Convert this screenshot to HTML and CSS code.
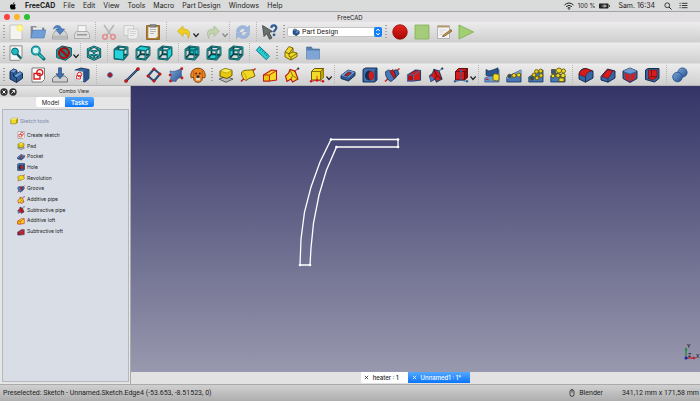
FILE: index.html
```html
<!DOCTYPE html>
<html lang="fr">
<head>
    <meta charset="UTF-8">
    <meta name="viewport" content="width=device-width, initial-scale=1">
    <title>FreeCAD</title>
    <link rel="stylesheet" href="styles.css">
</head>
<body>
    <!-- icon set -->
    <svg class="sprite" aria-hidden="true">
        <defs>
            <linearGradient id="gBlue" x1="0" y1="0" x2="1" y2="1"><stop offset="0" stop-color="#7ba9dc"/><stop offset="1" stop-color="#27508d"/></linearGradient>
            <linearGradient id="gRed" x1="0" y1="0" x2="0" y2="1"><stop offset="0" stop-color="#e8241c"/><stop offset="1" stop-color="#a80505"/></linearGradient>
        </defs>
        <symbol id="new" viewBox="0 0 16 16"><path d="M2 1h12v14.500H2z" fill="#f3f3f1" stroke="#b5b5b0" stroke-width=".7"/><circle cx="12" cy="4" r="3.600" fill="#fff36a" opacity=".8"/><path d="M12 1.500l.8 1.700 1.700.8-1.700.8-.8 1.700-.8-1.700-1.700-.8 1.700-.8z" fill="#fffbc0"/></symbol>
        <symbol id="open" viewBox="0 0 16 16"><path d="M1 2.500h5l1 1.500h7v9H1z" fill="#8b8f94" stroke="#64686c" stroke-width=".5"/><path d="M3 3.500h9v5H3z" fill="#eee"/><path d="M3 6h13l-2 8H.8z" fill="#6f9fd6" stroke="#4a78b4" stroke-width=".6"/></symbol>
        <symbol id="save" viewBox="0 0 16 16"><path d="M3 7h10l2.500 4.500v3.500H.5v-3.500z" fill="#d4d5d3" stroke="#83868a" stroke-width=".6"/><path d="M1 11.500h14v3H1z" fill="#b8bab8"/><path d="M1.500 5C2 .8 8.500-.2 9.500 5h3L8 10.500 3.700 5h2.600C6 3 3.500 3 1.500 5z" fill="#4d83c4" stroke="#2f5d99" stroke-width=".6"/></symbol>
        <symbol id="print" viewBox="0 0 16 16"><path d="M4 1.500h8V8H4z" fill="#f4f4f4" stroke="#a7a7a7" stroke-width=".6"/><path d="M2.500 7.500h11l2 3v4H.5v-4z" fill="#dedede" stroke="#8e8e8e" stroke-width=".6"/><path d="M3 10h10v1.500H3z" fill="#999"/></symbol>
        <symbol id="cut" viewBox="0 0 16 16"><path d="M3 1l7 10M13 1L6 11" stroke="#b7b7b7" stroke-width="1.600"/><g fill="none" stroke="#e58e8e" stroke-width="1.600"><circle cx="4" cy="12.800" r="2.300"/><circle cx="12" cy="12.800" r="2.300"/></g></symbol>
        <symbol id="copy" viewBox="0 0 16 16"><g fill="#ededed" stroke="#b9b9b9" stroke-width=".6"><path d="M1 1.500h9.500v10H1z"/><path d="M5 5h10v7.500L12.500 15H5z"/></g><path d="M7 7.500h6M7 9.500h6M7 11.500h4" stroke="#c7c7c7" stroke-width=".7"/></symbol>
        <symbol id="paste" viewBox="0 0 16 16"><path d="M1.500 1.500h13v14h-13z" fill="#b57d2c" stroke="#78501a" stroke-width=".7"/><path d="M3.300 3h9.400v9.500L10.500 14H3.300z" fill="#eeeeec"/><path d="M5 .6h6v2.600H5z" fill="#8b8d89" stroke="#555" stroke-width=".5"/><path d="M5 5.500h6M5 7.500h6M5 9.500h4" stroke="#aaa" stroke-width=".8"/></symbol>
        <symbol id="undo" viewBox="0 0 16 16"><path d="M1.500 7L7 2v3c6-.3 8.500 4 5 9.500.5-4-1.500-5.500-5-5v3z" fill="#efcf22" stroke="#c9a800" stroke-width=".6"/></symbol>
        <symbol id="redo" viewBox="0 0 16 16"><path d="M14.500 7L9 2v3C3 4.700.5 9 4 14.500c-.5-4 1.500-5.500 5-5v3z" fill="#c2d3ae" stroke="#a0b48b" stroke-width=".6"/></symbol>
        <symbol id="refresh" viewBox="0 0 16 16"><g fill="#9db8dc" stroke="#7c9dca" stroke-width=".5"><path d="M1.500 7.500C2 1.500 9 0 12.300 3.500L14.500 1.500V7.500H8.500l2-2C8 3.500 5 4.800 4.500 7.500z"/><path d="M14.500 8.700C14 14.700 7 16 3.700 12.500L1.500 14.500V8.700h6l-2 2C8 12.700 11 11.400 11.500 8.700z"/></g></symbol>
        <symbol id="whats" viewBox="0 0 16 16"><path d="M.5 1.500l10 6-3.500 1 3 5.500-2.500 1.200-2.700-5.500L2 12.500z" fill="#6a6f70" stroke="#3b4143" stroke-width=".8"/><path d="M9.300 3.800c.4-3.300 5.300-3 5 .2-.2 2-2.200 2.200-2.300 4.300" fill="none" stroke="#2e5a94" stroke-width="2.200"/><circle cx="12" cy="10.800" r="1.400" fill="#2e5a94"/></symbol>
        <symbol id="rec" viewBox="0 0 16 16"><circle cx="8" cy="8" r="7.300" fill="url(#gRed)" stroke="#7e0a0a" stroke-width=".7"/></symbol>
        <symbol id="stop" viewBox="0 0 16 16"><path d="M1 1h14v14H1z" fill="#a5cc79" stroke="#84ae5a" stroke-width=".8"/></symbol>
        <symbol id="macro" viewBox="0 0 16 16"><path d="M1.500 2h12v12.500h-12z" fill="#f4f4f4" stroke="#9d9d9d" stroke-width=".7"/><path d="M1.500 1.500h12v2h-12z" fill="#b59b6e"/><path d="M3.500 6h7M3.500 8h4M3.500 10.500h3" stroke="#c5c5c5" stroke-width=".7"/><path d="M15 5.500l1 1.500-7.500 5.200-2 .5.900-1.800z" fill="#d99b3d" stroke="#4e3715" stroke-width=".6"/></symbol>
        <symbol id="play" viewBox="0 0 16 16"><path d="M1 1l14.500 7L1 15z" fill="#9fd073" stroke="#7aab52" stroke-width=".8"/></symbol>

        <symbol id="fitall" viewBox="0 0 16 16"><path d="M2 .8h12v12L11.500 15.300H2z" fill="#f5f5f5" stroke="#777" stroke-width=".8"/><path d="M9 9l4 4.500" stroke="#0a5d66" stroke-width="2.400"/><circle cx="7" cy="6.500" r="3.400" fill="#1fb9c0" stroke="#0a6a72" stroke-width="1"/></symbol>
        <symbol id="fitsel" viewBox="0 0 16 16"><path d="M8.500 8.500l5.300 5.300" stroke="#0a6a72" stroke-width="3.300" stroke-linecap="round"/><path d="M8.500 8.500l5 5" stroke="#2bc9cf" stroke-width="1.500"/><circle cx="5.800" cy="5.600" r="4" fill="#d7f3f4" stroke="#0d7f88" stroke-width="2"/><circle cx="5.800" cy="5.600" r="3.700" fill="none" stroke="#31ced3" stroke-width=".7"/></symbol>
        <symbol id="drawstyle" viewBox="0 0 16 16"><path d="M.7 4.500L6 1l9.300 2v8L9.500 15.300.7 12.500z" fill="#18a7ad" stroke="#055055" stroke-width="1"/><circle cx="8" cy="8" r="5" fill="#2d7378" stroke="#b00808" stroke-width="2.200"/><path d="M4.500 4.500l7 7" stroke="#b00808" stroke-width="2.200"/></symbol>
        <symbol id="wire" viewBox="0 0 16 16"><g fill="none" stroke="#083f43" stroke-width="2.300" stroke-linejoin="round"><path d="M2 4.200l6-2.500 6 2.500v7.500l-6 2.800-6-2.800zM2 4.200l6 2.500 6-2.500M8 6.700v7.800M2 11.500l6-2.300 6 2.300"/></g><g fill="none" stroke="#28b7bc" stroke-width=".9"><path d="M2 4.200l6-2.500 6 2.500v7.500l-6 2.800-6-2.800zM2 4.200l6 2.500 6-2.500M8 6.700v7.800M2 11.500l6-2.300 6 2.300"/></g></symbol>
        <symbol id="cube" viewBox="0 0 16 16"><path d="M1.500 4.500L5.500 1.500l9 1v7.500L10.500 14.500l-9-1zM1.500 4.500l9 1v9M10.500 5.500l4-3M5.500 1.500V9l9 1M5.500 9l-4 4.500" fill="none" stroke="#07454a" stroke-width="1.800" stroke-linejoin="round"/><path d="M1.500 4.500L5.500 1.500l9 1v7.500L10.500 14.500l-9-1zM1.500 4.500l9 1v9M10.500 5.500l4-3" fill="none" stroke="#1ca5ab" stroke-width=".7"/></symbol>
        <symbol id="front" viewBox="0 0 16 16"><use href="#cube"/><path d="M1.500 4.500l9 1v9l-9-1z" fill="#24d4da" stroke="#08676d" stroke-width=".8"/></symbol>
        <symbol id="top" viewBox="0 0 16 16"><use href="#cube"/><path d="M1.500 4.500l4-3 9 1-4 3z" fill="#24d4da" stroke="#08676d" stroke-width=".8"/></symbol>
        <symbol id="right" viewBox="0 0 16 16"><use href="#cube"/><path d="M10.500 5.500l4-3V10l-4 4.500z" fill="#24d4da" stroke="#08676d" stroke-width=".8"/></symbol>
        <symbol id="rear" viewBox="0 0 16 16"><path d="M5.500 1.500l9 1V10l-9-1z" fill="#1dbfc5"/><use href="#cube"/></symbol>
        <symbol id="bottom" viewBox="0 0 16 16"><path d="M1.500 13.500l4-4.500 9 1-4 4.500z" fill="#24d4da"/><use href="#cube"/></symbol>
        <symbol id="left" viewBox="0 0 16 16"><path d="M1.500 4.500l4-3V9l-4 4.500z" fill="#24d4da"/><use href="#cube"/></symbol>
        <symbol id="ruler" viewBox="0 0 16 16"><path d="M4.500 1.500L14.500 11l-3.200 3.700L1.300 5.300z" fill="#27cdd3" stroke="#08747a" stroke-width=".9"/><path d="M6.500 3.500L5 5.300M8.500 5.400L7 7.200M10.500 7.300L9 9.100M12.500 9.200L11 11" stroke="#08666c" stroke-width=".8"/></symbol>
        <symbol id="part" viewBox="0 0 16 16"><g fill="#f2d925" stroke="#5f4f00" stroke-width=".8" stroke-linejoin="round"><path d="M2 7l4-5.500 4 1.500v4l4 1v3.500L8 15l-6-3z"/><path d="M2 7l4 1.800 4-1.800M6 8.800v2.500l2 1 6-4M8 12.300V15M6 8.800L10 3" fill="none"/></g></symbol>
        <symbol id="folder" viewBox="0 0 16 16"><path d="M1.500 2h5l1 2h7v10h-13z" fill="#5a80b3" stroke="#476894" stroke-width=".6"/><path d="M1.500 5.500h13V14h-13z" fill="#7fa5d6"/></symbol>

        <symbol id="body" viewBox="0 0 16 16"><path d="M2 4.500L5.500 2l3.500 1.500v3L12 4.800l2.500 1.500v5L8.500 15.500 2 12z" fill="#2f5e9c" stroke="#0d2240" stroke-width=".9"/><path d="M2 4.500L5.500 2 9 3.500 5.500 6zM5.500 9.300L9 6.500l3-1.700 2.500 1.500-6 4.500z" fill="#6d9bd2" stroke="#173763" stroke-width=".5"/><path d="M5.500 6v3.300l3 1.500v4.700" fill="none" stroke="#0d2240" stroke-width=".7"/></symbol>
        <symbol id="sketch" viewBox="0 0 16 16"><path d="M2 1h12.500v11.500L12 15H2z" fill="#fff" stroke="#6e6e6e" stroke-width=".9"/><g fill="none" stroke="#d81e1e" stroke-width="1.400"><circle cx="9.800" cy="5.600" r="3"/><path d="M4 6.500h6v5.500H4z"/></g></symbol>
        <symbol id="mapsketch" viewBox="0 0 16 16"><path d="M3 9h10l2.500 2.500V15H.5v-3.500z" fill="#cdd0ce" stroke="#5d6164" stroke-width=".8"/><path d="M6.500.8h3v6H12l-4 5-4-5h2.500z" fill="#3c6cab" stroke="#1d4270" stroke-width=".6"/></symbol>
        <symbol id="edits" viewBox="0 0 16 16"><path d="M1 3l6-2 8 1.500v9L11 15l-4-1z" fill="#3465a4" stroke="#0d2240" stroke-width=".8"/><path d="M9 4.700l6-2.200v9L11 15z" fill="#28528c"/><path d="M1 3.500l8 1.200V15l-8-2z" fill="#eee" stroke="#aaa" stroke-width=".4"/><circle cx="5.500" cy="7.500" r="2.200" fill="none" stroke="#d81e1e"/><path d="M2.500 8.500h4V12h-4z" fill="none" stroke="#d81e1e" stroke-width=".8"/></symbol>
        <symbol id="point" viewBox="0 0 16 16"><circle cx="8" cy="8" r="2.300" fill="#c20f16" stroke="#31568e" stroke-width="1"/></symbol>
        <symbol id="line" viewBox="0 0 16 16"><path d="M2.500 13.500l11-11" stroke="#162c4b" stroke-width="2.200"/><path d="M2.500 13.500l11-11" stroke="#4779b8" stroke-width=".9"/><g fill="#d81717" stroke="#6e0808" stroke-width=".4"><circle cx="2" cy="14" r="1.600"/><circle cx="14" cy="2" r="1.600"/></g></symbol>
        <symbol id="plane" viewBox="0 0 16 16"><path d="M8 2l6 5-6 7-6-5z" fill="none" stroke="#173254" stroke-width="2"/><path d="M8 2l6 5-6 7-6-5z" fill="none" stroke="#4e80bd" stroke-width=".7"/><g fill="#cf1717"><circle cx="8" cy="2" r="1.500"/><circle cx="14" cy="7" r="1.500"/><circle cx="8" cy="14" r="1.500"/><circle cx="2" cy="9" r="1.500"/></g></symbol>
        <symbol id="binder" viewBox="0 0 16 16"><path d="M2 4c4 1 7 0 12-3-1 4-1 6 0 10-3-1-5 1-6 3.500-2-.5-4-.5-6 .3C3.500 11 3 8 2 4z" fill="url(#gBlue)" stroke="#254a7d" stroke-width=".6"/><g fill="#cf1717"><circle cx="13.800" cy="1.700" r="1.400"/><circle cx="14" cy="11" r="1.400"/><circle cx="2" cy="8" r="1.300"/><circle cx="2.500" cy="14" r="1.400"/></g></symbol>
        <symbol id="clone" viewBox="0 0 16 16"><path d="M3.500 2.500C6 .8 10 .8 12.500 2.500c2.500 1.500 3.500 7 2 8.500L12.500 10c0 3-1 5.300-4.500 5.300S3.500 13 3.500 10L1.500 11C0 9.500 1 4 3.500 2.500z" fill="#ed8522" stroke="#7c3c05" stroke-width=".9"/><path d="M3.800 3.500v6M12.200 3.500v6" stroke="#a9530c" stroke-width=".8"/><circle cx="6.200" cy="6.500" r=".9" fill="#4b2300"/><circle cx="9.800" cy="6.500" r=".9" fill="#4b2300"/><path d="M6 10.500h4v3H6z" fill="#e9d9c2"/><path d="M6.500 8.500h3v2.300h-3z" fill="#222"/></symbol>

        <symbol id="block" viewBox="0 0 16 16"><path d="M1.500 5l3-2.500h10.500v8L12 13.500H1.500z" fill="#f2d925" stroke="#7c6700" stroke-width="1"/><path d="M12 5v8.500l3-3v-8z" fill="#b79a06"/><path d="M1.500 5l3-2.500h10.500L12 5z" fill="#fbf08a"/></symbol>
        <symbol id="pad" viewBox="0 0 16 16"><path d="M1 12L8 9.500l7 2.500-7 3.300z" fill="#bbb" stroke="#444" stroke-width=".8"/><path d="M2 4l5-2.500 7 1.800v5.200L9 11.500l-7-2z" fill="#e6c90f" stroke="#574900" stroke-width=".9"/><path d="M2 4l5-2.500 7 1.800-5 2.700z" fill="#fcec55" stroke="#8b7500" stroke-width=".4"/></symbol>
        <symbol id="revolution" viewBox="0 0 16 16"><path d="M1 14.500l4-4M12 4.500l3.500-3" stroke="#cf1717" stroke-width="1.500"/><path d="M1.500 5.500C4 2 8 4 12.500 2.500L15 9c-3 2-6 1.500-8.500 4.500C3.500 13 1.500 9 1.500 5.500z" fill="#f2d925" stroke="#655400" stroke-width=".9"/><path d="M1.500 5.500c3.500-.5 5 4 5 8" fill="none" stroke="#a98f00" stroke-width=".7"/></symbol>
        <symbol id="loft" viewBox="0 0 16 16"><path d="M1.500 8l8-5 5 .5v9.500L8 14H1.500z" fill="#f2d925" stroke="#c51414" stroke-width="1.100"/><path d="M1.500 8H7.500v6H1.500zM7.500 8l7-4.500" fill="#e8c70a" stroke="#c51414" stroke-width=".9"/></symbol>
        <symbol id="pipe" viewBox="0 0 16 16"><path d="M1.500 9C5 7 5.500 5 6 2.500l5 1.500 3 8-5.500 3L7 12l-4 2.500z" fill="#f2d925" stroke="#b51515" stroke-width="1.100"/><path d="M6 2.500l2.500 6L14 12M8.500 8.500L7 12" fill="none" stroke="#7a5d00" stroke-width=".8"/><path d="M10 5l4-3.500" stroke="#cf1717"/><circle cx="14.300" cy="1.600" r="1.100" fill="#173254"/></symbol>
        <symbol id="prim" viewBox="0 0 16 16"><path d="M2.500 4.500l3-3h9v9L11.500 13h-9z" fill="#f2d925" stroke="#5a4b00" stroke-width=".9"/><path d="M11.500 4.500v8.500l3-2.500v-9z" fill="#bfa208"/><path d="M2.500 4.500h9v8.500M11.500 4.500l3-3" fill="none" stroke="#5a4b00" stroke-width=".7"/><path d="M8 9v4.500M8 13l-6 1.500M8 13l6 1.500" stroke="#cf1717" stroke-width=".8"/><circle cx="2" cy="14.300" r="1.200" fill="#cf1717"/><circle cx="14" cy="14.300" r="1.200" fill="#cf1717"/><circle cx="8" cy="13.500" r="1.200" fill="#cf1717"/></symbol>

        <symbol id="pocket" viewBox="0 0 16 16"><path d="M1 8.500L8 3l7 2v3.500L8.500 14 1 11.500z" fill="#2c5792" stroke="#0d2240" stroke-width=".9"/><path d="M1 8.500L8 3l7 2-6.500 5.500z" fill="#6c9ad1"/><path d="M4.500 8.300L8.500 5l3 1-4 3.300z" fill="#cf1a1a" stroke="#222b40" stroke-width=".7"/></symbol>
        <symbol id="hole" viewBox="0 0 16 16"><path d="M1 2.500L3.500 1H15v12l-2.500 2H1z" fill="#3f71b1" stroke="#0d2240" stroke-width=".9"/><path d="M12.500 3v12L15 13V1.500z" fill="#1d4379"/><ellipse cx="7.500" cy="8.500" rx="4.500" ry="5" fill="#162d50"/><path d="M8.500 4a3.500 4.500 0 010 9c-2.500-1.500-2.500-7.500 0-9z" fill="#d21b1b"/></symbol>
        <symbol id="groove" viewBox="0 0 16 16"><path d="M1 14.500L15.500 1.500" stroke="#cf1717" stroke-width="1.500"/><path d="M1.500 5C4 1.500 7 4 9 4.500l3 6-5 4C3 13 1.500 9 1.500 5z" fill="#4678ba" stroke="#142e53" stroke-width=".8"/><path d="M6 4.500l3-2 3 6-2 3z" fill="#cf1a1a" stroke="#5e0a0a" stroke-width=".6"/><path d="M10 3.500C13 2 14 3 15 7l-3 3z" fill="#3465a4" stroke="#142e53" stroke-width=".8"/></symbol>
        <symbol id="subloft" viewBox="0 0 16 16"><path d="M1.500 8l8-5 5 .5v9.500L8 14H1.500z" fill="#d21b1b" stroke="#22406e" stroke-width="1.100"/><path d="M1.500 8H7.500v6H1.500zM7.500 8l7-4.500" fill="#b50e0e" stroke="#3f71b1" stroke-width=".9"/></symbol>
        <symbol id="subpipe" viewBox="0 0 16 16"><path d="M1.500 9C5 7 5.500 5 6 2.500l5 1.500 3 8-5.500 3L7 12l-4 2.500z" fill="#cf1a1a" stroke="#22406e" stroke-width="1.100"/><path d="M6 2.500l2.500 6L14 12M8.500 8.500L7 12" fill="none" stroke="#5b0808" stroke-width=".8"/><path d="M1.500 9l4 1.500v2L3 14.500z" fill="#4678ba"/><path d="M10 5l4-3.500" stroke="#3465a4"/><circle cx="14.300" cy="1.600" r="1.100" fill="#173254"/></symbol>
        <symbol id="subprim" viewBox="0 0 16 16"><path d="M2.500 4.500l3-3h9v9L11.500 13h-9z" fill="#d21b1b" stroke="#480808" stroke-width=".9"/><path d="M11.500 4.500v8.500l3-2.500v-9z" fill="#940a0a"/><path d="M2.500 4.500h9v8.500M11.500 4.500l3-3" fill="none" stroke="#580909" stroke-width=".7"/><path d="M8 4v9M8 13l-6 1.500M8 13l6 1.500" stroke="#3465a4" stroke-width=".9"/><circle cx="2" cy="14.200" r="1.200" fill="#3465a4"/><circle cx="14" cy="14.200" r="1.200" fill="#3465a4"/><circle cx="8" cy="4" r="1.200" fill="#3465a4"/></symbol>

        <symbol id="mirror" viewBox="0 0 16 16"><path d="M.8 11L7 8.500l8-6V15H.8z" fill="#6c9ad0" stroke="#2a548f" stroke-width=".7"/><path d="M2 2.500l3 1.500L10 2.500l4-1.700v5.700L9 9 2 8.500z" fill="#2a5590" stroke="#0d2240" stroke-width=".6"/><path d="M1 12.500l3-1 1 2z" fill="#cf1717"/><path d="M9 8l2-1.300 4 .8v5L13 14l-4-1z" fill="#f2d925" stroke="#6e5c00" stroke-width=".8"/></symbol>
        <symbol id="linpat" viewBox="0 0 16 16"><path d="M.8 10L15 3v12H.8z" fill="#4678b8" stroke="#16335e" stroke-width=".8"/><path d="M.8 10L15 3v3L.8 12z" fill="#7da9dc"/><g fill="#f2d925" stroke="#5c4c00" stroke-width=".8"><circle cx="3.500" cy="9" r="1.800" fill="#234b80"/><circle cx="8" cy="8.500" r="2"/><circle cx="12.700" cy="8" r="2"/></g></symbol>
        <symbol id="polpat" viewBox="0 0 16 16"><path d="M.8 10L15 3v12H.8z" fill="#4678b8" stroke="#16335e" stroke-width=".8"/><g fill="#e9cd18" stroke="#5c4c00" stroke-width=".8"><circle cx="8.500" cy="4.500" r="1.900"/><circle cx="12.700" cy="4" r="1.900"/><circle cx="6" cy="8" r="1.900"/><circle cx="13" cy="8.500" r="1.900"/><circle cx="9" cy="11" r="1.900"/><circle cx="4" cy="11.500" r="1.700" fill="#234b80"/></g></symbol>
        <symbol id="multi" viewBox="0 0 16 16"><path d="M.8 9L7 6l8 3v6H.8z" fill="#4678b8" stroke="#16335e" stroke-width=".8"/><g fill="#f2d925" stroke="#5c4c00" stroke-width=".8"><circle cx="3" cy="9" r="1.800"/><path d="M1.500 2.500h4v4h-4z" fill="#2c5792"/><circle cx="9" cy="3.500" r="2.500"/><circle cx="13.500" cy="4" r="2"/><circle cx="8" cy="8.500" r="2"/><circle cx="13" cy="8.500" r="2.200"/><path d="M9 11h5v3.500H9z"/></g></symbol>
        <symbol id="fillet" viewBox="0 0 16 16"><path d="M1 7c1-4 3-5.500 7-5.500l7 2.500v7l-7.500 4.200L1 12z" fill="#3465a4" stroke="#0d2240" stroke-width=".9"/><path d="M1 7.500C1.500 4 4 2 8 1.500l6 2.300C10 4.500 8 6.500 7.500 10z" fill="#d81b1b" stroke="#640a0a" stroke-width=".6"/><path d="M7.500 10v5.200" stroke="#0d2240" stroke-width=".7"/></symbol>
        <symbol id="chamfer" viewBox="0 0 16 16"><path d="M1 9.500L7.500 2 15 4v7l-7 4.200L1 13z" fill="#3465a4" stroke="#0d2240" stroke-width=".9"/><path d="M2 9.500l5.500-7L13 4l-5 7.500z" fill="#d81b1b" stroke="#640a0a" stroke-width=".6"/><path d="M8 11.500v3.700" stroke="#0d2240" stroke-width=".7"/></symbol>
        <symbol id="draft" viewBox="0 0 16 16"><path d="M1 4l7-3 7 3v7.500l-7 4-7-4z" fill="#3465a4" stroke="#0d2240" stroke-width=".9"/><path d="M1 4l7-3 7 3-7 2.500z" fill="#6e9cd2"/><path d="M2.500 6l5 1.500V14.500L3.500 12zM8.500 7.500l5-1.500-1 6-4 2.500z" fill="#d81b1b"/></symbol>
        <symbol id="thick" viewBox="0 0 16 16"><path d="M1.500 3L4 1.500h11v10L10.500 15l-9-2.500z" fill="#3465a4" stroke="#0d2240" stroke-width=".9"/><path d="M4.500 3h8.500v7l-4 3-4.500-1.500z" fill="#d81b1b" stroke="#5a0909" stroke-width=".5"/><path d="M7.500 3v6.500l5.500.5M7.500 9.500l-3 2" fill="none" stroke="#5a0909" stroke-width=".7"/></symbol>
        <symbol id="boolean" viewBox="0 0 16 16"><circle cx="10.500" cy="5.500" r="4.600" fill="url(#gBlue)" stroke="#204a87" stroke-width=".8"/><circle cx="5.500" cy="10" r="4.800" fill="url(#gBlue)" stroke="#204a87" stroke-width=".8"/></symbol>
        <symbol id="chev" viewBox="0 0 8 8"><path d="M1.500 2.500L4 5.500l2.700-3" fill="none" stroke="currentColor" stroke-width="1.200"/></symbol>
    </svg>

    <!-- system menu bar -->
    <nav class="menubar">
        <svg class="apple" viewBox="0 0 16 16" aria-hidden="true"><path d="M11 .5c.1 1.800-1.300 3.300-3 3.400C7.800 2.200 9.400.700 11 .5zM13.600 11.700c-.7 1.700-1.900 3.500-3.200 3.500-1 0-1.300-.6-2.500-.6s-1.600.6-2.500.6C3.600 15.200 1.900 12 1.900 9c0-3 1.900-4.600 3.600-4.600 1.100 0 1.900.7 2.600.7s1.600-.8 3-.7c.9 0 1.900.5 2.500 1.400-2.300 1.400-1.900 4.700 0 5.900z"/></svg>
        <a class="app" href="#">FreeCAD</a>
        <a href="#">File</a>
        <a href="#">Edit</a>
        <a href="#">View</a>
        <a href="#">Tools</a>
        <a href="#">Macro</a>
        <a href="#">Part Design</a>
        <a href="#">Windows</a>
        <a href="#">Help</a>
        <div class="tray">
            <svg class="wifi" viewBox="0 0 20 16" aria-hidden="true"><path d="M1 6q9-8 18 0M4.200 9.200q5.800-5 11.600 0M7.300 12.200q2.700-2.200 5.400 0" fill="none" stroke="#222" stroke-width="2"/><circle cx="10" cy="14" r="1.600" fill="#222"/></svg>
            <span class="charge">100 %</span>
            <svg class="battery" viewBox="0 0 22 12" aria-hidden="true"><rect x="0" y="1" width="19" height="10" rx="1.500" fill="#222"/><path d="M20 4h1.500v4H20z" fill="#222"/><path d="M5 6h4M10 3v6M10 4.500h3v3h-3M13 6h3" stroke="#ddd" stroke-width="1.400" fill="none"/></svg>
            <span class="clock">Sam. 16:34</span>
            <svg class="search" viewBox="0 0 16 16" aria-hidden="true"><circle cx="6.500" cy="6.500" r="4.800" fill="none" stroke="#222" stroke-width="1.700"/><path d="M10 10l5 5" stroke="#222" stroke-width="2"/></svg>
            <svg class="list" viewBox="0 0 20 16" aria-hidden="true"><path d="M1 3h2.500M1 8h2.500M1 13h2.500M6 3h13M6 8h13M6 13h13" stroke="#222" stroke-width="2"/></svg>
        </div>
    </nav>

    <header class="titlebar">
        <div class="lights"><i class="close"></i><i class="min"></i><i class="max"></i></div>
        <h1>FreeCAD</h1>
    </header>

    <!-- file / macro toolbar -->
    <div class="toolbar">
        <i class="grip"></i>
        <button aria-label="New"><svg><use href="#new"/></svg></button>
        <button aria-label="Open"><svg><use href="#open"/></svg></button>
        <button aria-label="Save"><svg><use href="#save"/></svg></button>
        <button aria-label="Print"><svg><use href="#print"/></svg></button>
        <i class="sep"></i>
        <button aria-label="Cut"><svg><use href="#cut"/></svg></button>
        <button aria-label="Copy"><svg><use href="#copy"/></svg></button>
        <button aria-label="Paste"><svg><use href="#paste"/></svg></button>
        <i class="sep"></i>
        <button class="drop" aria-label="Undo"><svg><use href="#undo"/></svg><svg class="chev"><use href="#chev"/></svg></button>
        <button class="drop off" aria-label="Redo"><svg><use href="#redo"/></svg><svg class="chev"><use href="#chev"/></svg></button>
        <i class="sep"></i>
        <button aria-label="Refresh"><svg><use href="#refresh"/></svg></button>
        <i class="sep"></i>
        <button aria-label="What's this?"><svg><use href="#whats"/></svg></button>
        <i class="grip"></i>
        <div class="workbench">
            <svg class="wb-icon"><use href="#body"/></svg>
            <select aria-label="Workbench"><option>Part Design</option></select>
            <svg class="stepper" viewBox="0 0 8 10" aria-hidden="true"><path d="M2.300 4L4 2l1.700 2M2.300 6L4 8l1.700-2" fill="none" stroke="#fff"/></svg>
        </div>
        <i class="grip"></i>
        <button aria-label="Record macro"><svg><use href="#rec"/></svg></button>
        <button aria-label="Stop macro"><svg><use href="#stop"/></svg></button>
        <button aria-label="Macros"><svg><use href="#macro"/></svg></button>
        <button aria-label="Execute macro"><svg><use href="#play"/></svg></button>
    </div>

    <!-- view toolbar -->
    <div class="toolbar">
        <i class="grip"></i>
        <button aria-label="Fit all"><svg><use href="#fitall"/></svg></button>
        <button aria-label="Fit selection"><svg><use href="#fitsel"/></svg></button>
        <button class="drop" aria-label="Draw style"><svg><use href="#drawstyle"/></svg><svg class="chev"><use href="#chev"/></svg></button>
        <i class="sep"></i>
        <button aria-label="Axonometric"><svg><use href="#wire"/></svg></button>
        <i class="sep"></i>
        <button aria-label="Front"><svg><use href="#front"/></svg></button>
        <button aria-label="Top"><svg><use href="#top"/></svg></button>
        <button aria-label="Right"><svg><use href="#right"/></svg></button>
        <i class="sep"></i>
        <button aria-label="Rear"><svg><use href="#rear"/></svg></button>
        <button aria-label="Bottom"><svg><use href="#bottom"/></svg></button>
        <button aria-label="Left"><svg><use href="#left"/></svg></button>
        <i class="sep"></i>
        <button aria-label="Measure distance"><svg><use href="#ruler"/></svg></button>
        <i class="grip"></i>
        <button aria-label="Create part"><svg><use href="#part"/></svg></button>
        <button aria-label="Create group"><svg><use href="#folder"/></svg></button>
    </div>

    <!-- part design toolbar -->
    <div class="toolbar design">
        <i class="grip"></i>
        <button aria-label="Create body"><svg><use href="#body"/></svg></button>
        <button aria-label="Create sketch"><svg><use href="#sketch"/></svg></button>
        <button aria-label="Map sketch"><svg><use href="#mapsketch"/></svg></button>
        <button aria-label="Edit sketch"><svg><use href="#edits"/></svg></button>
        <i class="sep"></i>
        <button aria-label="Datum point"><svg><use href="#point"/></svg></button>
        <button aria-label="Datum line"><svg><use href="#line"/></svg></button>
        <button aria-label="Datum plane"><svg><use href="#plane"/></svg></button>
        <button aria-label="Shape binder"><svg><use href="#binder"/></svg></button>
        <button aria-label="Clone"><svg><use href="#clone"/></svg></button>
        <i class="grip"></i>
        <button aria-label="Pad"><svg><use href="#pad"/></svg></button>
        <button aria-label="Revolution"><svg><use href="#revolution"/></svg></button>
        <button aria-label="Additive loft"><svg><use href="#loft"/></svg></button>
        <button aria-label="Additive pipe"><svg><use href="#pipe"/></svg></button>
        <button class="drop" aria-label="Additive primitive"><svg><use href="#prim"/></svg><svg class="chev"><use href="#chev"/></svg></button>
        <i class="sep"></i>
        <button aria-label="Pocket"><svg><use href="#pocket"/></svg></button>
        <button aria-label="Hole"><svg><use href="#hole"/></svg></button>
        <button aria-label="Groove"><svg><use href="#groove"/></svg></button>
        <button aria-label="Subtractive loft"><svg><use href="#subloft"/></svg></button>
        <button aria-label="Subtractive pipe"><svg><use href="#subpipe"/></svg></button>
        <button class="drop" aria-label="Subtractive primitive"><svg><use href="#subprim"/></svg><svg class="chev"><use href="#chev"/></svg></button>
        <i class="sep"></i>
        <button aria-label="Mirrored"><svg><use href="#mirror"/></svg></button>
        <button aria-label="Linear pattern"><svg><use href="#linpat"/></svg></button>
        <button aria-label="Polar pattern"><svg><use href="#polpat"/></svg></button>
        <button aria-label="MultiTransform"><svg><use href="#multi"/></svg></button>
        <i class="sep"></i>
        <button aria-label="Fillet"><svg><use href="#fillet"/></svg></button>
        <button aria-label="Chamfer"><svg><use href="#chamfer"/></svg></button>
        <button aria-label="Draft"><svg><use href="#draft"/></svg></button>
        <button aria-label="Thickness"><svg><use href="#thick"/></svg></button>
        <i class="sep"></i>
        <button aria-label="Boolean"><svg><use href="#boolean"/></svg></button>
    </div>

    <main class="workspace">
        <aside class="combo">
            <div class="dock-title">
                <button aria-label="Close"><svg viewBox="0 0 8 8"><circle cx="4" cy="4" r="3.700" fill="#333"/><path d="M2.500 2.500l3 3M5.500 2.500l-3 3" stroke="#fff"/></svg></button>
                <button aria-label="Float"><svg viewBox="0 0 8 8"><circle cx="4" cy="4" r="3.700" fill="#333"/><path d="M2.400 5.600l3-3M3.300 2.500h2.300v2.300" stroke="#fff" stroke-width=".9" fill="none"/></svg></button>
                <h2>Combo View</h2>
            </div>
            <div class="switch">
                <button>Model</button>
                <button class="active">Tasks</button>
            </div>
            <div class="tasks">
                <h3><svg><use href="#block"/></svg>Sketch tools</h3>
                <ul>
                    <li><a href="#"><svg><use href="#sketch"/></svg>Create sketch</a></li>
                    <li><a href="#"><svg><use href="#pad"/></svg>Pad</a></li>
                    <li><a href="#"><svg><use href="#pocket"/></svg>Pocket</a></li>
                    <li><a href="#"><svg><use href="#hole"/></svg>Hole</a></li>
                    <li><a href="#"><svg><use href="#revolution"/></svg>Revolution</a></li>
                    <li><a href="#"><svg><use href="#groove"/></svg>Groove</a></li>
                    <li><a href="#"><svg><use href="#pipe"/></svg>Additive pipe</a></li>
                    <li><a href="#"><svg><use href="#subpipe"/></svg>Subtractive pipe</a></li>
                    <li><a href="#"><svg><use href="#loft"/></svg>Additive loft</a></li>
                    <li><a href="#"><svg><use href="#subloft"/></svg>Subtractive loft</a></li>
                </ul>
            </div>
        </aside>

        <section class="documents">
            <div class="view3d">
                <svg class="profile" aria-hidden="true">
                    <path d="M200 53.500h67V61h-61.500L195.500 84 188 109l-5.500 28-2.500 25-1 17h-10l1-26 3.500-27 6.500-25 9-25z" fill="none" stroke="#fff" stroke-width="1.300"/>
                    <g fill="#fff"><circle cx="200" cy="53.500" r="1.300"/><circle cx="267" cy="53.500" r="1.300"/><circle cx="267" cy="61" r="1.300"/><circle cx="205.500" cy="61" r="1.300"/><circle cx="179" cy="179" r="1.300"/><circle cx="169" cy="179" r="1.300"/></g>
                </svg>
                <svg class="axes" viewBox="0 0 18 20">
                    <path d="M4 15V6" stroke="#1b8a3c" stroke-width="1.200"/><path d="M4 15h8" stroke="#c01822" stroke-width="1.200"/>
                    <path d="M2.500 7.500L4 4l1.500 3.500z" fill="#1b8a3c"/><path d="M11 13.500l3.500 1.500-3.500 1.500z" fill="#c01822"/><circle cx="4" cy="15" r="1.500" fill="#1420b0"/>
                    <text x="5" y="5">Y</text><text x="14" y="15">X</text><text x="6" y="14">Z</text>
                </svg>
            </div>
            <div class="doc-tabs">
                <button><svg viewBox="0 0 6 6"><path d="M1 1l4 4M5 1L1 5" stroke="currentColor" stroke-width=".9"/></svg>heater : 1</button>
                <button class="active"><svg viewBox="0 0 6 6"><path d="M1 1l4 4M5 1L1 5" stroke="currentColor" stroke-width=".9"/></svg>Unnamed1 : 1*</button>
            </div>
        </section>
    </main>

    <footer class="statusbar">
        <span>Preselected: Sketch - Unnamed.Sketch.Edge4 (-53.653, -8.51523, 0)</span>
        <button class="nav"><svg viewBox="0 0 6 8" aria-hidden="true"><rect x="1" y=".6" width="4" height="6.800" rx="2" fill="none" stroke="#222" stroke-width=".8"/><path d="M3 .6v3" stroke="#222" stroke-width=".8"/></svg>Blender</button>
        <span>341,12 mm x 171,58 mm</span>
    </footer>
</body>
</html>
```

FILE: styles.css
```css
:root {
    --ui: Inter, "Liberation Sans", sans-serif;
    --narrow: Roboto, "Liberation Sans", sans-serif;
    --accent: #147efb;
    --ink: #222;
}
* {
    box-sizing: border-box;
}
body {
    margin: 0;
    min-height: 100vh;
    display: flex;
    flex-direction: column;
    font-family: var(--ui);
    font-size: 7px;
    line-height: 9px;
    color: var(--ink);
    background: #e4e4e4;
}
h1, h2, h3, ul {
    margin: 0;
    padding: 0;
    font-size: inherit;
    font-weight: 400;
    list-style: none;
}
a {
    color: inherit;
    text-decoration: none;
}
button {
    padding: 0;
    border: 0;
    background: none;
    font: inherit;
    color: inherit;
}
svg {
    display: block;
    flex: none;
}
.sprite {
    position: absolute;
    width: 0;
    height: 0;
}

/* menu bar */
.menubar {
    display: flex;
    align-items: center;
    gap: 8px;
    height: 12px;
    padding: 0 12px 0 9px;
    background: #dadbdb;
    border-bottom: 1px solid #a3a3a3;
    white-space: nowrap;
}
.apple {
    width: 8px;
    height: 8px;
}
.app {
    font-weight: 700;
}
.tray {
    display: flex;
    align-items: center;
    gap: 4px;
    margin-left: auto;
}
.wifi {
    width: 10px;
    height: 8px;
}
.charge {
    font-size: 6px;
}
.battery {
    width: 11px;
    height: 6px;
}
.clock {
    margin: 0 5px 0 4px;
}
.search {
    width: 8px;
    height: 8px;
}
.list {
    width: 9px;
    height: 7px;
    margin-left: 3px;
}

/* title bar */
.titlebar {
    display: grid;
    grid-template-columns: 1fr auto 1fr;
    align-items: center;
    height: 10px;
    background: #e2dfe2;
    font-size: 6px;
}
.lights {
    display: flex;
    gap: 4px;
    padding-left: 4px;
}
.lights i {
    width: 6px;
    height: 6px;
    border-radius: 50%;
}
.close { background: #f9423c; }
.min { background: #fcb524; }
.max { background: #2bc231; }

/* toolbars */
.toolbar {
    display: flex;
    align-items: center;
    height: 21px;
    background: linear-gradient(#ececec, #cfcfcf);
    border-bottom: 1px solid #dedede;
}
.toolbar.design {
    height: 22px;
    border-bottom-color: #b4b4b4;
}
.toolbar button {
    display: flex;
    justify-content: center;
    align-items: center;
    width: 22px;
    height: 20px;
}
.toolbar button svg {
    width: 16px;
    height: 16px;
}
.toolbar button.drop {
    width: 29px;
    justify-content: flex-end;
}
.toolbar.design button.drop {
    width: 28px;
}
.toolbar button .chev {
    width: 8px;
    height: 8px;
    margin-top: 6px;
    margin-right: -2px;
}
.off .chev {
    color: #888;
}
.sep {
    width: 5px;
    height: 20px;
    background: repeating-linear-gradient(#b5b5b5 0 1px, transparent 1px 2px) center / 1px 100% no-repeat;
}
.design .sep {
    width: 6px;
}
.grip {
    width: 6px;
    height: 14px;
    background: repeating-linear-gradient(#a2a2a2 0 1px, transparent 1px 3px) center / 2px 100% no-repeat;
}
.grip:first-child {
    width: 5px;
    background-position: right;
}
.workbench {
    position: relative;
    width: 95px;
    margin-right: 1px;
}
.workbench select {
    display: block;
    width: 100%;
    height: 10px;
    padding: 0 10px 0 14px;
    border: 1px solid #c4c4c4;
    border-radius: 2px;
    background: #fff;
    appearance: none;
    font: 7px/8px var(--narrow);
    color: var(--ink);
}
.wb-icon {
    position: absolute;
    left: 5px;
    top: 1px;
    width: 8px;
    height: 8px;
}
.stepper {
    position: absolute;
    right: 0;
    top: 0;
    width: 8px;
    height: 10px;
    border-radius: 2px;
    background: var(--accent);
}

/* combo view */
.workspace {
    display: flex;
    flex: 1;
}
.combo {
    display: flex;
    flex-direction: column;
    width: 131px;
    padding-bottom: 2px;
    border-right: 1px solid #aaa;
    background: #e6e6e6;
    font-size: 5px;
}
.dock-title {
    display: flex;
    align-items: center;
    gap: 1px;
    height: 11px;
    background: linear-gradient(#e8e8e8, #d2d2d2);
}
.dock-title svg {
    width: 8px;
    height: 8px;
}
.dock-title h2 {
    flex: 1;
    text-align: center;
}
.switch {
    display: flex;
    align-self: center;
    width: 58px;
    height: 10px;
    border-radius: 2px;
    overflow: hidden;
    background: #fff;
    font-size: 6px;
}
.switch button {
    flex: 1;
}
.active {
    background: linear-gradient(#55a8fd, #0a75fa);
    color: #fff;
    font-weight: 600;
}
.tasks {
    flex: 1;
    margin: 2px 1px 0 2px;
    padding: 7px 7px 0;
    border: 1px solid #b4b8be;
    background: #d8dde6;
}
.tasks h3 {
    display: flex;
    align-items: center;
    gap: 2px;
    height: 8px;
    color: #7a86a6;
}
.tasks svg {
    width: 8px;
    height: 8px;
}
.tasks ul {
    display: grid;
    grid-auto-rows: 1fr;
    height: 107px;
    margin-top: 5px;
    padding-left: 7px;
}
.tasks li, .tasks a {
    display: flex;
    align-items: center;
    gap: 2px;
}

/* 3D view */
.documents {
    display: flex;
    flex-direction: column;
    flex: 1;
}
.view3d {
    position: relative;
    flex: 1;
    background: linear-gradient(#343467, #9898ae);
}
.profile {
    position: absolute;
    width: 100%;
    height: 100%;
}
.axes {
    position: absolute;
    right: 0;
    bottom: 9px;
    width: 18px;
    height: 20px;
    font-size: 5px;
}
.doc-tabs {
    display: flex;
    justify-content: center;
    height: 12px;
    padding-bottom: 1px;
    background: #e2e2e2;
    font-size: 6px;
}
.doc-tabs button {
    display: flex;
    align-items: center;
    gap: 4px;
    padding: 0 9px 0 3px;
    background-color: #fff;
    font-weight: 500;
}
.doc-tabs button.active {
    padding-left: 4px;
    background-color: var(--accent);
}
.doc-tabs svg {
    width: 5px;
    height: 5px;
}

/* status bar */
.statusbar {
    display: flex;
    align-items: center;
    gap: 19px;
    height: 17px;
    padding: 0 1px 0 3px;
    border-top: 1px solid #aaa;
    background: linear-gradient(#d0d0d0, #aeaeae);
    font-family: var(--narrow);
    white-space: nowrap;
}
.nav {
    display: flex;
    align-items: center;
    gap: 4px;
    margin-left: auto;
}
.nav svg {
    width: 6px;
    height: 8px;
}
```
